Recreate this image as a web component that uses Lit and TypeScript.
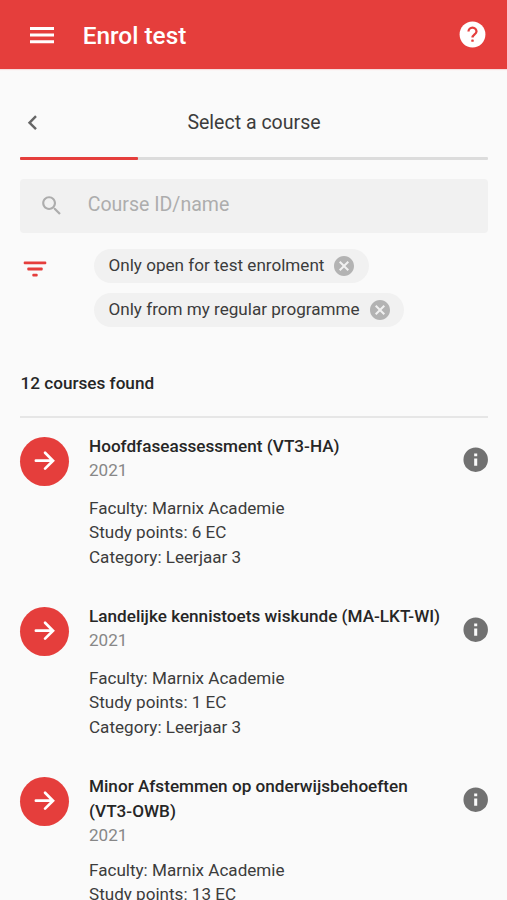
import { LitElement, html, css, svg } from "lit";
import { customElement, property } from "lit/decorators.js";
import { classMap } from "lit/directives/class-map.js";

interface Course {
  title: string;
  code: string;
  year: string;
  faculty: string;
  points: string;
  category: string;
  tall?: boolean;
}

const COURSES: Course[] = [
  { title: "Hoofdfaseassessment", code: "(VT3-HA)", year: "2021", faculty: "Marnix Academie", points: "6 EC", category: "Leerjaar 3" },
  { title: "Landelijke kennistoets wiskunde", code: "(MA-LKT-WI)", year: "2021", faculty: "Marnix Academie", points: "1 EC", category: "Leerjaar 3" },
  { title: "Minor Afstemmen op onderwijsbehoeften", code: "(VT3-OWB)", year: "2021", faculty: "Marnix Academie", points: "13 EC", category: "Leerjaar 3", tall: true },
];

const FILTERS = ["Only open for test enrolment", "Only from my regular programme"];

const ICONS = {
  menu: svg`<path d="M3 6h18v2.2H3zM3 10.9h18v2.2H3zM3 15.9h18v2.2H3z"/>`,
  help: svg`<circle cx="12" cy="12" r="10"/><path d="M8.9 9.7a3.1 3.1 0 0 1 6.2 0c0 2.1-3.1 2.4-3.1 4.7" fill="none" stroke="#e53e3c" stroke-width="1.75"/><rect x="11.05" y="15.8" width="1.9" height="1.9" rx="0.5" fill="#e53e3c"/>`,
  back: svg`<path d="M15.41 7.41L14 6l-6 6 6 6 1.41-1.41L10.83 12z"/>`,
  search: svg`<path d="M15.5 14h-.79l-.28-.27C15.41 12.59 16 11.11 16 9.5 16 5.91 13.09 3 9.5 3S3 5.91 3 9.5 5.91 16 9.5 16c1.61 0 3.09-.59 4.23-1.57l.27.28v.79l5 4.99L20.49 19l-4.99-5zm-6 0C7.01 14 5 11.99 5 9.5S7.01 5 9.5 5 14 7.01 14 9.5 11.99 14 9.5 14z"/>`,
  filter: svg`<rect x="0.7" y="4.4" width="22.6" height="2.9" rx="1"/><rect x="4.3" y="10.5" width="15.4" height="2.9" rx="1"/><rect x="9.3" y="16.7" width="5.4" height="2.9" rx="1"/>`,
  cancel: svg`<path d="M12 2C6.47 2 2 6.47 2 12s4.47 10 10 10 10-4.47 10-10S17.53 2 12 2zm5 13.59L15.59 17 12 13.41 8.41 17 7 15.59 10.59 12 7 8.41 8.41 7 12 10.59 15.59 7 17 8.41 13.41 12 17 15.59z"/>`,
  forward: svg`<path d="M4.8 12H18.6M12.3 5.5L18.8 12l-6.5 6.5" fill="none" stroke="currentColor" stroke-width="2.2" stroke-linecap="round" stroke-linejoin="miter"/>`,
  info: svg`<path fill-rule="evenodd" d="M12 2a10 10 0 1 0 0 20 10 10 0 0 0 0-20zm1.25 15h-2.5v-6h2.5zm0-7.8h-2.5V6.9h2.5z"/>`,
};

@customElement("ui-icon")
class UiIcon extends LitElement {
  @property() name: keyof typeof ICONS = "menu";
  static styles = css`
    :host { display: block; flex: none; width: 29.4px; height: 29.4px; }
    .glyph { display: block; width: 100%; height: 100%; fill: currentColor; }
  `;
  render() {
    return html`<svg class="glyph" viewBox="0 0 24 24">${ICONS[this.name]}</svg>`;
  }
}

@customElement("course-item")
class CourseItem extends LitElement {
  @property({ attribute: false }) course!: Course;
  static styles = css`
    :host { display: flex; align-items: flex-start; height: 170px; }
    .go {
      flex: none; display: flex; align-items: center; justify-content: center;
      width: 49px; height: 49px; border-radius: 50%; margin-top: 3px;
      background: #e53e3c; color: #fff;
    }
    .body { flex: 1; min-width: 0; margin-left: 20px; color: #3c3c3c; font-size: 17.08px; line-height: 24.5px; }
    .title { color: #262626; font-size: 17.15px; font-weight: 500; line-height: 25.5px; }
    .code { white-space: nowrap; }
    .year { color: #878787; line-height: 24px; margin-top: -1.5px; }
    .details { margin-top: 14px; }
    .tall .details { margin-top: 10.5px; }
    .info { color: #717171; margin: 11.5px -2px 0 0; }
  `;
  render() {
    const c = this.course;
    return html`
      <div class="go"><ui-icon name="forward"></ui-icon></div>
      <div class=${classMap({ body: true, tall: !!c.tall })}>
        <div class="title">${c.title} <span class="code">${c.code}</span></div>
        <div class="year">${c.year}</div>
        <div class="details">
          <div>Faculty: ${c.faculty}</div>
          <div>Study points: ${c.points}</div>
          <div>Category: ${c.category}</div>
        </div>
      </div>
      <ui-icon class="info" name="info"></ui-icon>
    `;
  }
}

@customElement("app-root")
class AppRoot extends LitElement {
  static styles = css`
    :host {
      display: block; height: 900px; overflow: hidden; background: #fafafa;
      font-family: Roboto, "Liberation Sans", sans-serif; color: #3c3c3c;
    }
    .bar {
      display: flex; align-items: center; box-sizing: border-box; height: 69px;
      padding: 0 18.8px 0 26px; background: #e53e3c; color: #fff;
      box-shadow: 0 1px 1px #f6dddd;
    }
    .menu { width: 32px; height: 32px; }
    .bar-title { flex: 1; margin-left: 24.7px; font-size: 24.4px; font-weight: 500; line-height: 30px; padding-top: 2px; }
    .help { width: 31px; height: 31px; }
    .content { padding: 0 19px 0 20px; }
    .step { display: grid; grid-template-columns: 30px 1fr 30px; align-items: center; height: 88px; }
    .back { color: #666; margin: 20px 0 0 -2.5px; }
    .step-title { text-align: center; font-size: 19.55px; line-height: 26px; margin-top: 20px; }
    .progress { height: 3px; border-radius: 1px; background: #dcdcdc; }
    .done { width: 117.5px; height: 3px; border-radius: 1px; background: #e53e3c; }
    .search {
      display: flex; align-items: center; height: 54px; margin-top: 19px; border-radius: 4px;
      background: #f1f1f1; color: #adadad; font-size: 19.55px; line-height: 26px;
    }
    .search-text { margin-top: -2px; }
    .search-icon { width: 25.5px; height: 25.5px; margin: 0 23.2px 0 19px; }
    .filters { display: flex; align-items: flex-start; margin-top: 16px; }
    .filter-icon { width: 24px; height: 24px; margin-top: 8px; margin-left: 3px; color: #e53e3c; }
    .chips { display: flex; flex-direction: column; align-items: flex-start; gap: 10px; margin-left: 47px; }
    .chip {
      display: flex; align-items: center; height: 34px; padding: 0 12.5px 0 14.5px; border-radius: 17px;
      background: #f1f1f1; font-size: 17.1px; line-height: 24px; white-space: nowrap;
    }
    .chip-text { margin-top: -2px; }
    .chip-icon { width: 24px; height: 24px; margin-left: 8px; color: #b3b3b3; }
    .count { height: 91px; box-sizing: border-box; padding: 44px 0 0 0.5px; font-size: 17.15px; font-weight: 500; line-height: 24px; color: #262626; border-bottom: 2px solid #e6e6e6; }
    .list { padding-top: 15.5px; }
  `;
  render() {
    return html`
      <header class="bar">
        <ui-icon class="menu" name="menu"></ui-icon>
        <div class="bar-title">Enrol test</div>
        <ui-icon class="help" name="help"></ui-icon>
      </header>
      <main class="content">
        <div class="step">
          <ui-icon class="back" name="back"></ui-icon>
          <div class="step-title">Select a course</div>
        </div>
        <div class="progress"><div class="done"></div></div>
        <div class="search">
          <ui-icon class="search-icon" name="search"></ui-icon>
          <span class="search-text">Course ID/name</span>
        </div>
        <div class="filters">
          <ui-icon class="filter-icon" name="filter"></ui-icon>
          <div class="chips">
            ${FILTERS.map((f) => html`<div class="chip"><span class="chip-text">${f}</span><ui-icon class="chip-icon" name="cancel"></ui-icon></div>`)}
          </div>
        </div>
        <div class="count">12 courses found</div>
        <div class="list">
          ${COURSES.map((c) => html`<course-item .course=${c}></course-item>`)}
        </div>
      </main>
    `;
  }
}
